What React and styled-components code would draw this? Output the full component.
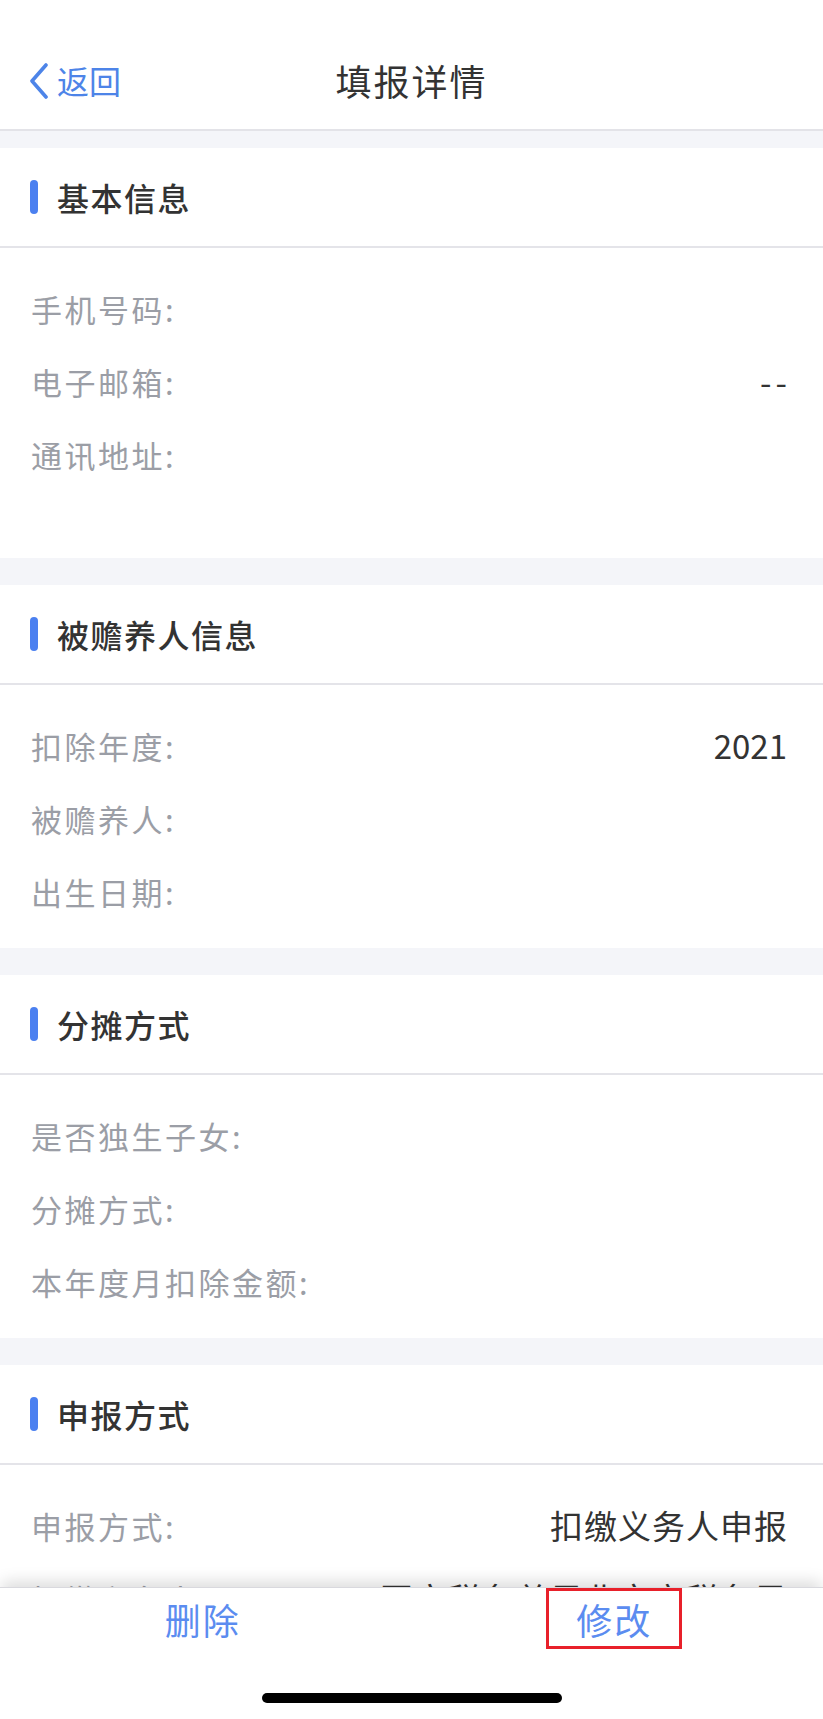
import React from "react";
import styled, { createGlobalStyle } from "styled-components";

const GlobalStyle = createGlobalStyle`
  html, body {
    margin: 0;
    padding: 0;
    background: #ffffff;
  }
  body {
    font-family: "Noto Sans CJK SC", "Noto Sans", "Liberation Sans", sans-serif;
  }
  * {
    box-sizing: border-box;
  }
`;

const sections = [
  {
    title: "基本信息",
    rows: [
      { label: "手机号码:", value: "" },
      { label: "电子邮箱:", value: "--", spacing: 4 },
      { label: "通讯地址:", value: "", tall: true },
    ],
  },
  {
    title: "被赡养人信息",
    rows: [
      { label: "扣除年度:", value: "2021" },
      { label: "被赡养人:", value: "" },
      { label: "出生日期:", value: "" },
    ],
  },
  {
    title: "分摊方式",
    rows: [
      { label: "是否独生子女:", value: "" },
      { label: "分摊方式:", value: "" },
      { label: "本年度月扣除金额:", value: "" },
    ],
  },
  {
    title: "申报方式",
    rows: [
      { label: "申报方式:", value: "扣缴义务人申报", spacing: 1 },
      { label: "扣缴义务人:", value: "国家税务总局北京市税务局", spacing: 1 },
    ],
  },
];

function App() {
  return (
    <Page>
      <GlobalStyle />
      <NavBar>
        <BackLink>
          <svg width="22" height="36" viewBox="0 0 22 36" fill="none">
            <polyline
              points="18,2 4,18 18,34"
              stroke="#4d84e8"
              strokeWidth="3.6"
              strokeLinecap="round"
              strokeLinejoin="round"
            />
          </svg>
          <span>返回</span>
        </BackLink>
        <NavTitle>填报详情</NavTitle>
        <NavSide />
      </NavBar>

      <Content>
        {sections.map((section) => (
          <Card key={section.title}>
            <CardHeader>
              <Accent />
              <CardTitle>{section.title}</CardTitle>
            </CardHeader>
            <CardBody>
              {section.rows.map((row) => (
                <Row key={row.label} $tall={row.tall}>
                  <Label>{row.label}</Label>
                  <Value $spacing={row.spacing || 0}>{row.value}</Value>
                </Row>
              ))}
            </CardBody>
          </Card>
        ))}
      </Content>

      <BottomBar>
        <Actions>
          <ActionButton>删除</ActionButton>
          <ActionButton $marked>修改</ActionButton>
        </Actions>
        <HomeArea>
          <HomeIndicator />
        </HomeArea>
      </BottomBar>
    </Page>
  );
}

const Page = styled.div`
  width: 823px;
  height: 1719px;
  display: flex;
  flex-direction: column;
  background: #f4f5f9;
  overflow: hidden;
`;

const NavBar = styled.header`
  flex: 0 0 auto;
  height: 131px;
  padding-top: 30px;
  display: grid;
  grid-template-columns: 200px 1fr 200px;
  align-items: center;
  background: #ffffff;
  border-bottom: 2px solid #e3e3e8;
`;

const BackLink = styled.div`
  display: flex;
  align-items: center;
  gap: 7px;
  padding-left: 28px;
  color: #4d84e8;
  font-size: 32px;
  line-height: 1;

  svg {
    margin-top: 2px;
  }
`;

const NavTitle = styled.h1`
  margin: 0;
  text-align: center;
  font-size: 36px;
  font-weight: 400;
  letter-spacing: 2px;
  color: #333333;
  line-height: 1;
`;

const NavSide = styled.div``;

const Content = styled.main`
  flex: 1 1 auto;
  min-height: 0;
  overflow: hidden;
  display: flex;
  flex-direction: column;
  gap: 27px;
  padding-top: 17px;
`;

const Card = styled.section`
  flex: 0 0 auto;
  background: #ffffff;
`;

const CardHeader = styled.div`
  height: 100px;
  display: flex;
  align-items: center;
  padding-left: 30px;
  border-bottom: 2px solid #e4e4e9;
`;

const Accent = styled.span`
  width: 8px;
  height: 34px;
  border-radius: 4px;
  background: #4b80f0;
  margin-right: 19px;
`;

const CardTitle = styled.h2`
  margin: 0;
  font-size: 32px;
  font-weight: 500;
  letter-spacing: 1.5px;
  color: #333333;
  line-height: 1;
`;

const CardBody = styled.div`
  padding: 24px 0 20px;
`;

const Row = styled.div`
  display: flex;
  justify-content: space-between;
  align-items: flex-start;
  min-height: ${(p) => (p.$tall ? "120px" : "73px")};
  padding: 0 36px 0 31px;
  line-height: 73px;
  white-space: nowrap;
`;

const Label = styled.span`
  font-size: 31px;
  letter-spacing: 2.5px;
  color: #9b9ea6;
`;

const Value = styled.span`
  font-size: 33px;
  letter-spacing: ${(p) => p.$spacing}px;
  margin-right: ${(p) => -p.$spacing}px;
  color: #333333;
`;

const BottomBar = styled.footer`
  position: relative;
  z-index: 1;
  flex: 0 0 132px;
  display: flex;
  flex-direction: column;
  background: #ffffff;
  border-top: 1px solid #d9d9de;
  box-shadow: 0 -8px 14px -2px rgba(0, 0, 0, 0.13);
`;

const Actions = styled.div`
  display: grid;
  grid-template-columns: 1fr 1fr;
  align-items: center;
  justify-items: center;
  height: 61px;
`;

const ActionButton = styled.button`
  appearance: none;
  background: transparent;
  font-family: inherit;
  font-size: 36px;
  letter-spacing: 2px;
  line-height: 1;
  color: #5b8cf0;
  height: 61px;
  padding: 0 ${(p) => (p.$marked ? "27px" : "0")};
  border: ${(p) => (p.$marked ? "3px solid #e8202a" : "none")};
  margin-left: -6px;
`;

const HomeArea = styled.div`
  flex: 1 1 auto;
  display: flex;
  align-items: flex-end;
  justify-content: center;
  padding-bottom: 16px;
`;

const HomeIndicator = styled.div`
  width: 300px;
  height: 10px;
  border-radius: 5px;
  background: #000000;
`;

export default App;
